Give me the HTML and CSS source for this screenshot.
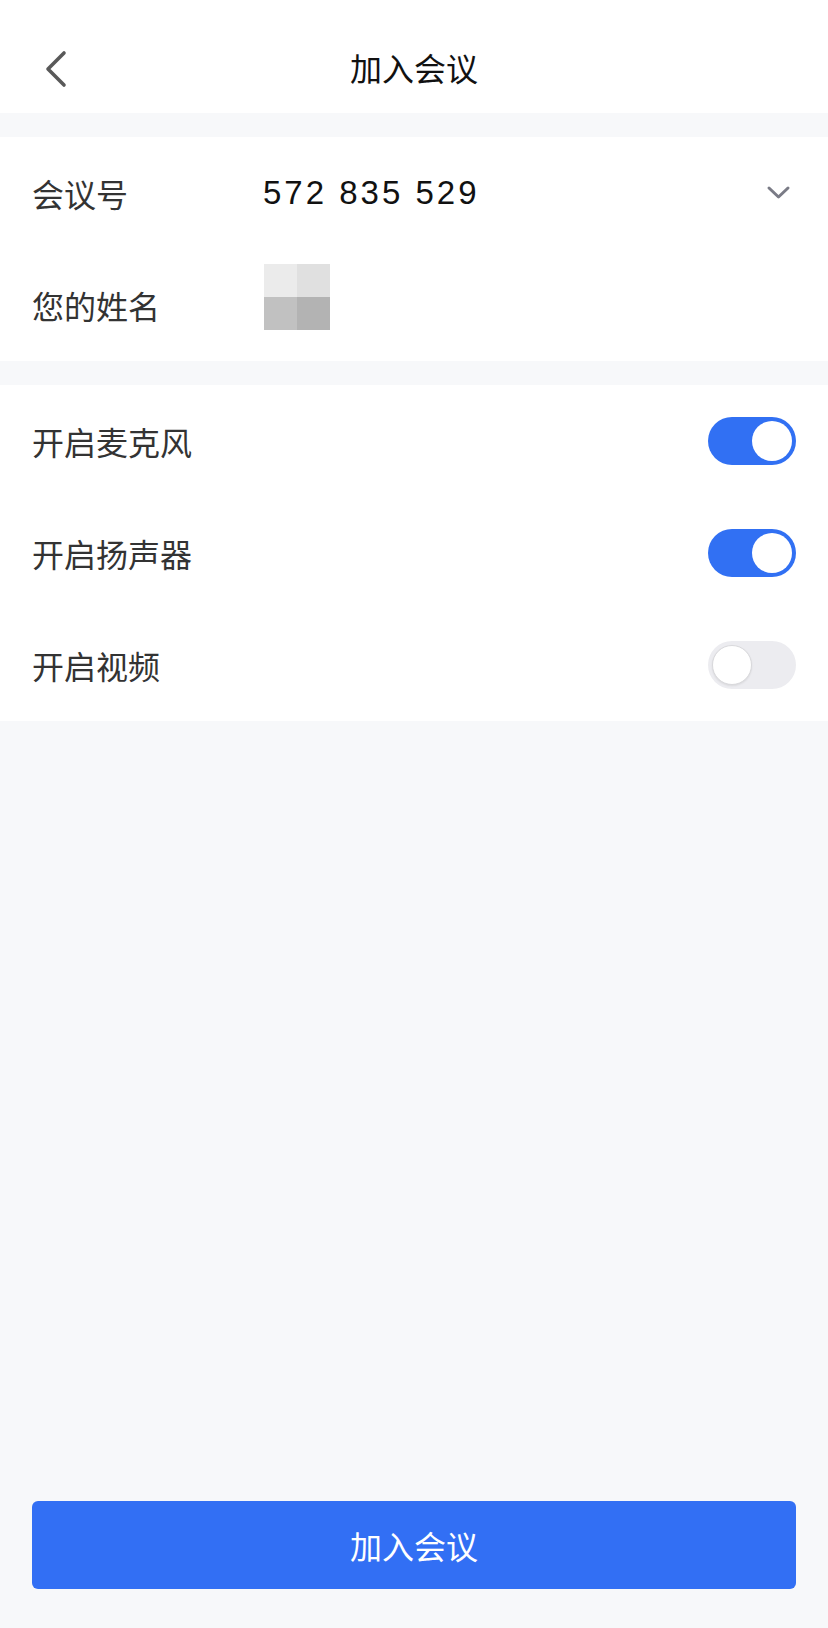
FILE: index.html
```html
<!DOCTYPE html>
<html lang="zh-CN">
<head>
<meta charset="utf-8">
<title>加入会议</title>
<link rel="stylesheet" href="styles.css">
</head>
<body>
<div class="page">
  <header class="header">
    <div class="navbar">
      <div class="nav-left">
        <svg class="back" width="24" height="40" viewBox="0 0 24 40">
          <polyline points="19,3 3,19 19,35" fill="none" stroke="#595959" stroke-width="3.6" stroke-linecap="round" stroke-linejoin="round"/>
        </svg>
      </div>
      <div class="nav-title">加入会议</div>
      <div class="nav-right"></div>
    </div>
  </header>

  <section class="group">
    <div class="row">
      <div class="label">会议号</div>
      <div class="value number">572 835 529</div>
      <svg class="dropdown" width="26" height="16" viewBox="0 0 26 16">
        <polyline points="3,3 12.5,12 22,3" fill="none" stroke="#7a7b86" stroke-width="3" stroke-linecap="round" stroke-linejoin="round"/>
      </svg>
    </div>
    <div class="row">
      <div class="label">您的姓名</div>
      <div class="value">
        <div class="mosaic">
          <span class="m1"></span><span class="m2"></span><span class="m3"></span><span class="m4"></span>
        </div>
      </div>
    </div>
  </section>

  <section class="group">
    <div class="row">
      <div class="label">开启麦克风</div>
      <div class="switch on"><span class="knob"></span></div>
    </div>
    <div class="row">
      <div class="label">开启扬声器</div>
      <div class="switch on"><span class="knob"></span></div>
    </div>
    <div class="row">
      <div class="label">开启视频</div>
      <div class="switch off"><span class="knob"></span></div>
    </div>
  </section>

  <div class="spacer"></div>

  <div class="footer">
    <button class="join-btn">加入会议</button>
  </div>
</div>
</body>
</html>
```

FILE: styles.css
```css
* {
  box-sizing: border-box;
}

html, body {
  margin: 0;
  padding: 0;
}

body {
  background: #f7f8fa;
  font-family: "Noto Sans CJK SC", "Noto Sans", sans-serif;
  color: #333333;
}

.page {
  width: 828px;
  min-height: 1628px;
  display: flex;
  flex-direction: column;
}

.header {
  background: #ffffff;
  padding-top: 26px;
  height: 113px;
}

.navbar {
  height: 87px;
  display: grid;
  grid-template-columns: 1fr auto 1fr;
  align-items: center;
}

.nav-left {
  padding-left: 45px;
  display: flex;
  align-items: center;
}

.back {
  display: block;
}

.nav-title {
  font-size: 32px;
  color: #111111;
  line-height: 1;
  padding-bottom: 6px;
}

.group {
  background: #ffffff;
  margin-top: 24px;
}

.row {
  height: 112px;
  display: flex;
  align-items: center;
  padding: 0 32px;
}

.label {
  width: 230px;
  flex: none;
  font-size: 32px;
  line-height: 1;
  color: #333333;
}

.value {
  flex: 1;
  display: flex;
  align-items: center;
}

.number {
  font-family: "Liberation Sans", Arial, sans-serif;
  font-size: 33px;
  letter-spacing: 3px;
  color: #111111;
  padding-left: 1px;
}

.dropdown {
  display: block;
  margin-right: 4px;
}

.mosaic {
  display: grid;
  grid-template-columns: 33px 33px;
  grid-template-rows: 33px 33px;
  margin-left: 2px;
  margin-bottom: 16px;
}

.m1 { background: #ebebeb; }
.m2 { background: #e0e0e0; }
.m3 { background: #c1c1c1; }
.m4 { background: #b3b3b3; }

.switch {
  margin-left: auto;
  width: 88px;
  height: 48px;
  border-radius: 24px;
  padding: 4px;
  display: flex;
  flex: none;
}

.switch .knob {
  width: 40px;
  height: 40px;
  border-radius: 50%;
  background: #ffffff;
}

.switch.on {
  background: #3170f3;
  justify-content: flex-end;
}

.switch.off {
  background: #ececf0;
  justify-content: flex-start;
}

.switch.off .knob {
  border: 1.5px solid #d9d9dc;
  box-shadow: 0 1px 2px rgba(0, 0, 0, 0.08);
}

.spacer {
  flex: 1;
}

.footer {
  padding: 0 32px 39px;
}

.join-btn {
  display: block;
  width: 100%;
  height: 88px;
  border: none;
  border-radius: 6px;
  background: #326ff4;
  color: #ffffff;
  font-family: "Noto Sans CJK SC", "Noto Sans", sans-serif;
  font-size: 32px;
  line-height: 1;
  padding: 0;
}
```
